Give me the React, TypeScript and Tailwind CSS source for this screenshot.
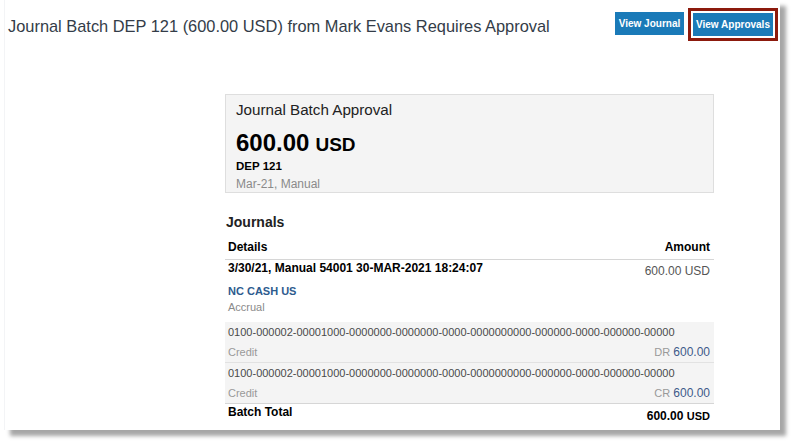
const account = '0100-000002-00001000-0000000-0000000-0000-0000000000-000000-0000-000000-00000';

const lines = [
  { account, side: 'DR', amount: '600.00' },
  { account, side: 'CR', amount: '600.00' },
];

export default function App() {
  return (
    <div className="w-[792px] h-[442px] bg-white font-['Liberation_Sans',Arial,sans-serif] overflow-hidden">
      <div className="ml-[4px] w-[776px] h-[430px] bg-white border-l border-gray-100 shadow-[6px_6px_4px_rgba(0,0,0,0.35)]">
        {/* Header */}
        <div className="flex items-start justify-between pl-[3px] pr-[2px]">
          <h1 className="mt-[15px] text-[16.4px] leading-[22px] text-[#333c48]">
            Journal Batch DEP 121 (600.00 USD) from Mark Evans Requires Approval
          </h1>
          <div className="mt-[8px] flex items-start gap-[4px]">
            <button className="mt-[4px] h-[23px] w-[69px] bg-[#1a7ab8] text-white text-[10px] font-bold">
              View Journal
            </button>
            <div className="flex border-[3px] border-[#8c1a0d] p-[2px]">
              <button className="h-[23px] w-[80px] bg-[#1a7ab8] text-white text-[10px] font-bold">
                View Approvals
              </button>
            </div>
          </div>
        </div>

        <div className="ml-[220px] w-[489px] mt-[53px]">
          {/* Summary card */}
          <div className="bg-[#f4f4f4] border border-[#dedede] px-[10px] pt-[5px]">
            <div className="text-[15.2px] leading-[20px] text-[#222]">Journal Batch Approval</div>
            <div className="mt-[10px] leading-[26px] text-black font-bold">
              <span className="text-[24px]">600.00</span>
              <span className="text-[19px] ml-[6px]">USD</span>
            </div>
            <div className="text-[11.5px] leading-[14px] font-bold text-black">DEP 121</div>
            <div className="mt-[3px] text-[12px] leading-[16px] text-[#8a8a8a]">Mar-21, Manual</div>
          </div>

          {/* Journals */}
          <div className="mt-[20px] pl-px text-[14px] leading-[18px] font-bold text-[#222]">Journals</div>
          <div className="mt-[8px] flex justify-between pl-[3px] pr-[4px] text-[12px] leading-[16px] font-bold text-black border-b border-[#d6d6d6] pb-[4px]">
            <span>Details</span>
            <span>Amount</span>
          </div>
          <div className="flex items-start justify-between pl-[3px] pr-[4px]">
            <span className="text-[12px] leading-[16px] font-bold text-black">
              3/30/21, Manual 54001 30-MAR-2021 18:24:07
            </span>
            <span className="mt-[3px] text-[12px] leading-[16px] text-[#555]">600.00 USD</span>
          </div>
          <div className="pl-[3px] mt-[4px] text-[11px] leading-[16px] font-bold text-[#2d5b8e]">NC CASH US</div>
          <div className="pl-[3px] text-[11px] leading-[16px] text-[#8a8a8a]">Accrual</div>

          {/* Lines */}
          <div className="mt-[7px] bg-[#f4f4f4]">
            {lines.map((line, i) => (
              <div key={i} className={`pl-[3px] pr-[4px] pt-[2px] pb-[2px] ${i > 0 ? 'border-t border-[#e2e2e2]' : ''}`}>
                <div className="text-[11px] leading-[16px] text-[#4a4a4a]">{line.account}</div>
                <div className="mt-[4px] flex justify-between text-[11px] leading-[16px]">
                  <span className="text-[#999]">Credit</span>
                  <span className="text-[#999]">
                    {line.side} <span className="text-[#3e5a8a] text-[12px]">{line.amount}</span>
                  </span>
                </div>
              </div>
            ))}
          </div>

          {/* Batch total */}
          <div className="flex items-start justify-between pl-[3px] pr-[4px] border-t border-[#d6d6d6]">
            <span className="text-[12px] leading-[16px] font-bold text-black">Batch Total</span>
            <span className="mt-[4px] text-[12px] leading-[16px] font-bold text-black">
              600.00 <span className="text-[11px]">USD</span>
            </span>
          </div>
        </div>
      </div>
    </div>
  );
}
